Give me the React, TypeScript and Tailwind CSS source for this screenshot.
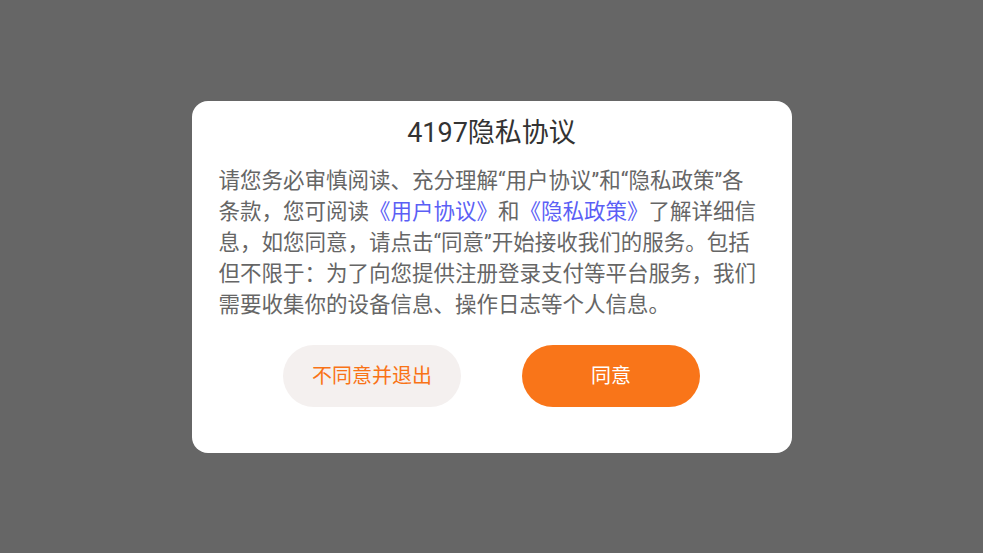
import React from "react";

export default function App() {
  return (
    <div
      className="w-[983px] h-[553px] bg-[#666666] flex items-center justify-center"
      style={{ fontFamily: 'Roboto, "Noto Sans CJK SC", sans-serif' }}
    >
      <div className="w-[600px] h-[352px] bg-white rounded-[16px] flex flex-col pt-[14px] px-[27px]">
        <h1 className="text-[27px] leading-[36px] text-[#333333] text-center">4197隐私协议</h1>
        <p className="mt-[14px] w-[542px] text-[21.5px] leading-[31px] text-[#666666]">
          请您务必审慎阅读、充分理解“用户协议”和“隐私政策”各条款，您可阅读
          <span className="text-[#5b5ff5]">《用户协议》</span>和
          <span className="text-[#5b5ff5]">《隐私政策》</span>
          了解详细信息，如您同意，请点击“同意”开始接收我们的服务。包括但不限于：为了向您提供注册登录支付等平台服务，我们需要收集你的设备信息、操作日志等个人信息。
        </p>
        <div className="mt-[25px] flex justify-center gap-[61px]">
          <button className="w-[178px] h-[62px] rounded-full bg-[#f4f0ef] text-[#f97316] text-[20px]">
            不同意并退出
          </button>
          <button className="w-[178px] h-[62px] rounded-full bg-[#f97519] text-white text-[20px]">
            同意
          </button>
        </div>
      </div>
    </div>
  );
}
